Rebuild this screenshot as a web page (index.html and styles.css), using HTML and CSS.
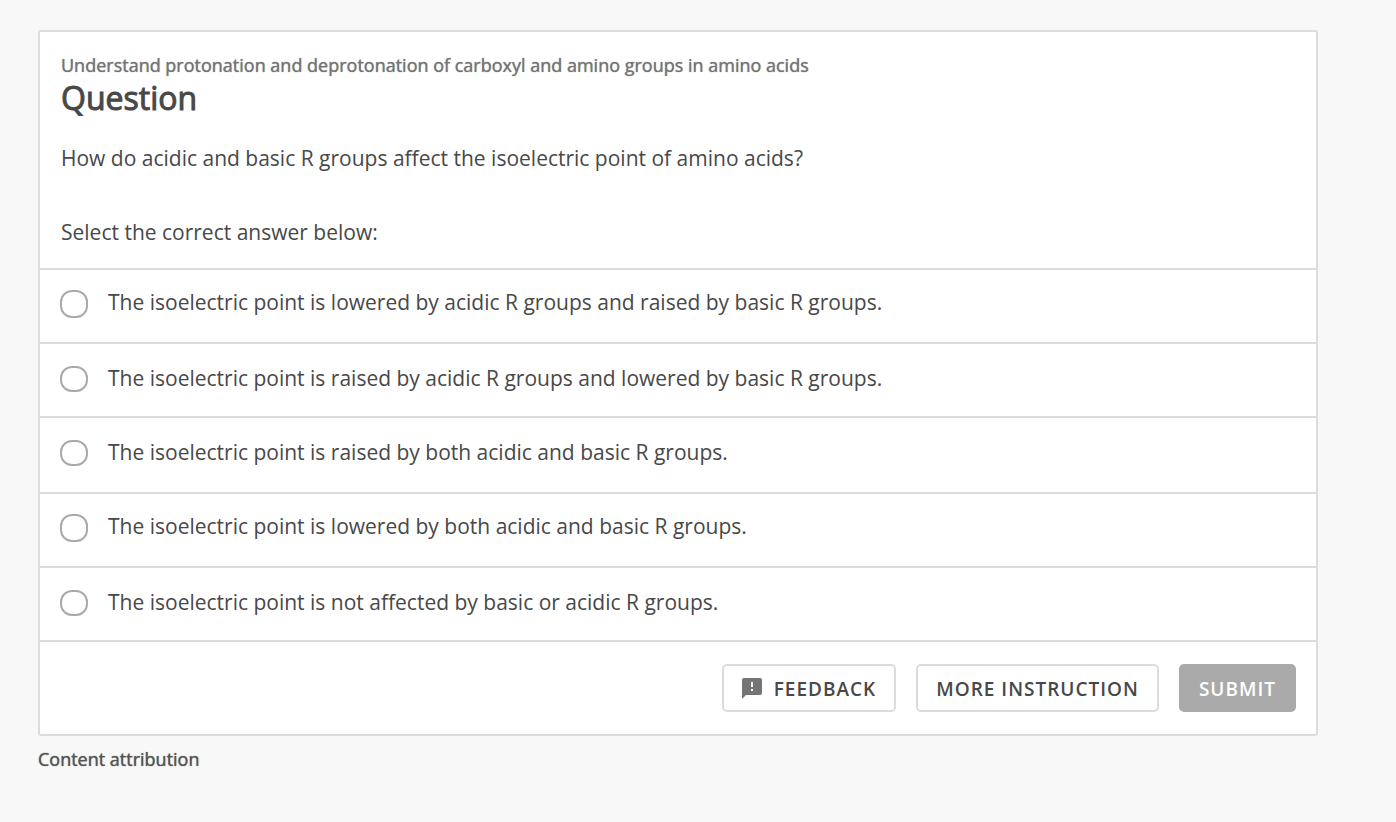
FILE: index.html
```html
<!DOCTYPE html>
<html lang="en">
<head>
<meta charset="utf-8">
<meta name="viewport" content="width=device-width, initial-scale=1">
<title>Question</title>
<link rel="stylesheet" href="styles.css">
</head>
<body>
<main class="page">
<form class="card">
<header class="card-header">
<p class="objective">Understand protonation and deprotonation of carboxyl and amino groups in amino acids</p>
<h1 class="title">Question</h1>
<p class="prompt">How do acidic and basic R groups affect the isoelectric point of amino acids?</p>
<p class="hint" id="hint">Select the correct answer below:</p>
</header>
<div class="choices" role="radiogroup" aria-labelledby="hint">
<label class="choice"><input class="radio" type="radio" name="answer"><span>The isoelectric point is lowered by acidic R groups and raised by basic R groups.</span></label>
<label class="choice choice-low"><input class="radio" type="radio" name="answer"><span>The isoelectric point is raised by acidic R groups and lowered by basic R groups.</span></label>
<label class="choice choice-low choice-tall"><input class="radio" type="radio" name="answer"><span>The isoelectric point is raised by both acidic and basic R groups.</span></label>
<label class="choice"><input class="radio" type="radio" name="answer"><span>The isoelectric point is lowered by both acidic and basic R groups.</span></label>
<label class="choice choice-low"><input class="radio" type="radio" name="answer"><span>The isoelectric point is not affected by basic or acidic R groups.</span></label>
</div>
<footer class="actions">
<button class="button" type="button"><svg class="icon" viewBox="0 0 20 21" aria-hidden="true"><path fill="#757575" fill-rule="evenodd" d="M2 0h16a2 2 0 0 1 2 2v13a2 2 0 0 1-2 2H4l-4 4V2a2 2 0 0 1 2-2zM9 4v5h2V4zM9 11v2h2v-2z"/></svg>Feedback</button>
<button class="button" type="button">More instruction</button>
<button class="button button-submit" type="submit" disabled>Submit</button>
</footer>
</form>
<a class="attribution" href="#">Content attribution</a>
</main>
</body>
</html>
```
FILE: styles.css
```css
* {
  box-sizing: border-box;
}

body {
  margin: 0;
  background: #f8f8f8;
  color: #484848;
  font-family: "Open Sans", sans-serif;
  font-size: 21px;
  line-height: 30px;
}

.page {
  padding: 30px 78px 30px 38px;
}

.card {
  background: #fff;
  border: 2px solid #dcdcdc;
  border-radius: 3px;
}

.card-header {
  padding: 19px 21px 21px;
}

.objective,
.title,
.prompt,
.hint {
  margin: 0;
}

.objective {
  color: #757575;
  font-size: 18px;
  font-weight: 400;
  line-height: 28px;
  text-shadow: 0 0 1px currentColor;
}

.title {
  font-size: 32px;
  font-weight: 400;
  line-height: 38px;
  -webkit-text-stroke: 1px currentColor;
}

.prompt {
  margin-top: 26px;
}

.hint {
  margin-top: 44px;
}

.choice {
  display: flex;
  align-items: flex-start;
  gap: 20px;
  min-height: 74px;
  padding: 17px 20px;
  border-top: 2px solid #dcdcdc;
}

.choice-low {
  padding: 19px 20px;
}

.choice-tall {
  min-height: 76px;
}

.radio {
  appearance: none;
  flex: none;
  width: 28px;
  height: 28px;
  margin: 3px 0 0;
  border: 2px solid #aaa;
  border-radius: 12px;
  background: #fff;
}

.choice-low .radio {
  height: 26px;
}

.radio:checked {
  background: #aaa;
}

.actions {
  display: flex;
  justify-content: flex-end;
  gap: 20px;
  padding: 22px 20px;
  border-top: 2px solid #dcdcdc;
}

.button {
  display: flex;
  align-items: center;
  gap: 12px;
  height: 48px;
  padding: 1px 18px 0;
  border: 2px solid #dcdcdc;
  border-radius: 5px;
  background: #fff;
  color: #484848;
  font: 600 19px "Open Sans", sans-serif;
  letter-spacing: 1px;
  text-transform: uppercase;
}

.button-submit {
  border-color: #aaa;
  background: #aaa;
  color: #fff;
}

.icon {
  width: 20px;
  height: 21px;
}

.attribution {
  display: inline-block;
  margin-top: 8px;
  color: #555;
  font-size: 18px;
  text-decoration: none;
  text-shadow: 0 0 1px currentColor;
}
```
